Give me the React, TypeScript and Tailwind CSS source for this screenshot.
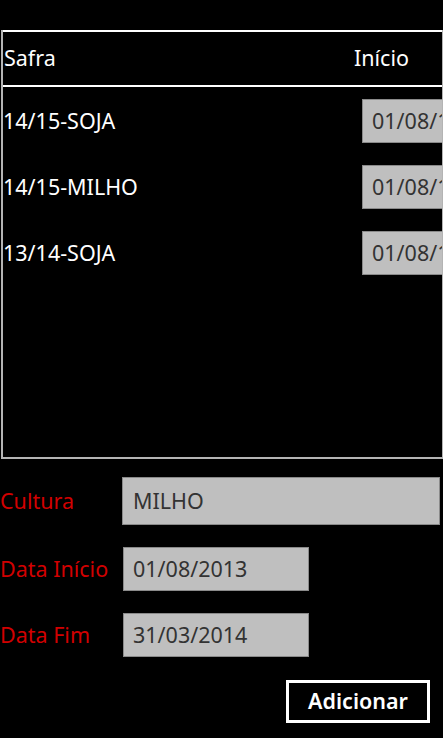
const rows = [
  { safra: '14/15-SOJA', inicio: '01/08/14' },
  { safra: '14/15-MILHO', inicio: '01/08/14' },
  { safra: '13/14-SOJA', inicio: '01/08/13' },
]

const font = { fontFamily: '"Noto Sans", "Open Sans", sans-serif' }

export default function App() {
  return (
    <div className="w-[443px] h-[738px] bg-black overflow-hidden text-white" style={font}>
      {/* Grid */}
      <div className="mt-[30px] ml-px h-[429px] border-l-2 border-b-2 border-r border-[#b4b4b4] overflow-hidden">
        <div className="h-[57px] border-2 border-r-0 border-white flex items-center justify-between -ml-[2px] -mr-px pl-px pr-[34px] text-[21.5px]">
          <span>Safra</span>
          <span>Início</span>
        </div>
        <div className="pt-[12px] flex flex-col gap-[22px]">
          {rows.map((r) => (
            <div key={r.safra} className="flex items-center justify-between h-[44px]">
              <span className="text-[21.5px] pt-px">{r.safra}</span>
              <div className="w-[80px] h-[44px] bg-[#bfbfbf] border border-[#8a8a8a] border-r-0 text-[#333] text-[21.5px] pl-[9px] flex items-center overflow-hidden whitespace-nowrap">
                {r.inicio}
              </div>
            </div>
          ))}
        </div>
      </div>

      {/* Form */}
      <div className="mt-[18px] flex flex-col">
        <div className="flex items-center h-[48px]">
          <span className="w-[122px] text-[21.5px] text-[#d20000]">Cultura</span>
          <div className="w-[318px] h-[48px] bg-[#bfbfbf] border border-[#8a8a8a] text-[#333] text-[21.5px] pl-[10px] flex items-center">
            MILHO
          </div>
        </div>
        <div className="flex items-center h-[44px] mt-[22px]">
          <span className="w-[123px] text-[21.5px] text-[#d20000]">Data Início</span>
          <div className="w-[186px] h-[44px] bg-[#bfbfbf] border border-[#8a8a8a] text-[#333] text-[21.5px] pl-[9px] flex items-center">
            01/08/2013
          </div>
        </div>
        <div className="flex items-center h-[44px] mt-[22px]">
          <span className="w-[123px] text-[21.5px] text-[#d20000]">Data Fim</span>
          <div className="w-[186px] h-[44px] bg-[#bfbfbf] border border-[#8a8a8a] text-[#333] text-[21.5px] pl-[9px] flex items-center">
            31/03/2014
          </div>
        </div>
        <div className="flex justify-end mt-[23px] pr-[13px]">
          <button className="w-[144px] h-[43px] border-[3px] border-white text-white text-[21.5px] font-semibold flex items-center justify-center">
            Adicionar
          </button>
        </div>
      </div>
    </div>
  )
}
